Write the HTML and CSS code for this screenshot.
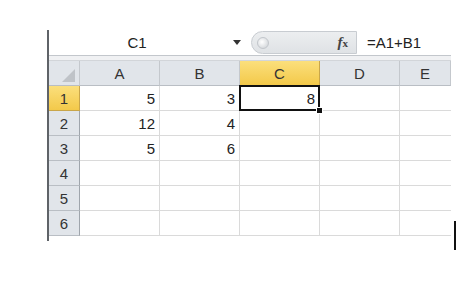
FILE: index.html
```html
<!DOCTYPE html>
<html>
<head>
  <meta charset="UTF-8">
  <title>Sheet</title>
  <link rel="stylesheet" href="styles.css">
</head>
<body>
  <div class="page">
    <div class="sheet">
      <div class="formula-bar">
        <div class="name-box">C1</div>
        <div class="name-arrow"></div>
        <div class="fx-pill">
          <span class="knob"></span>
          <span class="fx"><i>f</i><small>x</small></span>
        </div>
        <div class="formula">=A1+B1</div>
      </div>
      <div class="band"></div>

      <div class="grid">
        <div class="hd corner"><span class="tri"></span></div>
        <div class="hd col">A</div>
        <div class="hd col">B</div>
        <div class="hd col active">C</div>
        <div class="hd col">D</div>
        <div class="hd col">E</div>

        <div class="hd row active">1</div>
        <div class="cell">5</div>
        <div class="cell">3</div>
        <div class="cell selected">8<span class="handle"></span></div>
        <div class="cell"></div>
        <div class="cell"></div>

        <div class="hd row">2</div>
        <div class="cell">12</div>
        <div class="cell">4</div>
        <div class="cell"></div>
        <div class="cell"></div>
        <div class="cell"></div>

        <div class="hd row">3</div>
        <div class="cell">5</div>
        <div class="cell">6</div>
        <div class="cell"></div>
        <div class="cell"></div>
        <div class="cell"></div>

        <div class="hd row">4</div>
        <div class="cell"></div>
        <div class="cell"></div>
        <div class="cell"></div>
        <div class="cell"></div>
        <div class="cell"></div>

        <div class="hd row">5</div>
        <div class="cell"></div>
        <div class="cell"></div>
        <div class="cell"></div>
        <div class="cell"></div>
        <div class="cell"></div>

        <div class="hd row">6</div>
        <div class="cell"></div>
        <div class="cell"></div>
        <div class="cell"></div>
        <div class="cell"></div>
        <div class="cell"></div>
      </div>
      <div class="tail"></div>
    </div>
    <div class="edge"></div>
  </div>
</body>
</html>
```

FILE: styles.css
```css
body { margin: 0; background: #fff; font-family: "Liberation Sans", Arial, sans-serif; color: #333; }

.page { display: flex; align-items: flex-start; padding: 30px 0 0 47px; }

.sheet { width: 404px; border-left: 2px solid #5f6368; }

/* formula bar */
.formula-bar { display: flex; align-items: center; height: 25px; }
.name-box { width: 176px; text-align: center; font-size: 15px; color: #222; }
.name-arrow {
  width: 0; height: 0; margin-left: 8px;
  border-left: 4px solid transparent; border-right: 4px solid transparent;
  border-top: 5px solid #333;
}
.fx-pill {
  display: flex; align-items: center; justify-content: space-between;
  width: 106px; height: 23px; margin-left: 10px;
  background: linear-gradient(#eceef0, #dfe2e5);
  border: 1px solid #c8ccd1; border-radius: 12px 0 0 12px;
  box-sizing: border-box; padding: 0 8px 0 5px;
}
.knob {
  width: 10px; height: 10px; border-radius: 50%;
  background: radial-gradient(circle at 40% 40%, #fff, #c9cdd2);
  border: 1px solid #c2c6cb;
}
.fx { font-family: "Liberation Serif", serif; font-size: 15px; font-weight: bold; color: #444; }
.fx small { font-size: 11px; }
.formula { margin-left: 10px; font-size: 15px; color: #222; }

.band { height: 4px; background: #f0f1f3; border-top: 1px solid #c3c7cc; border-bottom: 1px solid #d2d5d9; width: 402px; }

/* grid */
.grid {
  display: grid;
  grid-template-columns: 31px 80px 80px 80px 80px 51px;
  grid-auto-rows: 25px;
  font-size: 15px;
}
.hd {
  display: flex; align-items: center; justify-content: center;
  background: #e1e5ea; color: #333;
  border-right: 1px solid #c4c8cd; border-bottom: 1px solid #b9bec4;
}
.hd.col:last-child { border-right: none; }
.hd.active { background: linear-gradient(#fbdf7c, #f3c94a); border-color: #c9a64a; }
.corner { position: relative; }
.tri {
  position: absolute; right: 4px; bottom: 3px;
  width: 0; height: 0;
  border-left: 13px solid transparent; border-bottom: 13px solid #bfc3c8;
}
.row { border-right-color: #9fa5ac; }

.cell {
  display: flex; align-items: center; justify-content: flex-end;
  padding-right: 4px;
  border-right: 1px solid #dadada; border-bottom: 1px solid #dadada;
  color: #222;
}
.cell:nth-child(6n) { border-right: none; }
.selected { position: relative; }
.selected::before {
  content: ""; position: absolute; left: -1px; top: -1px; right: -1px; bottom: -1px;
  border: 2px solid #111;
}
.handle {
  position: absolute; right: -4px; bottom: -4px;
  width: 5px; height: 5px; background: #111; border: 1px solid #fff;
}

.tail { height: 5px; }

.edge { width: 2px; height: 29px; margin: 191px 0 0 1px; background: #111; }
```
